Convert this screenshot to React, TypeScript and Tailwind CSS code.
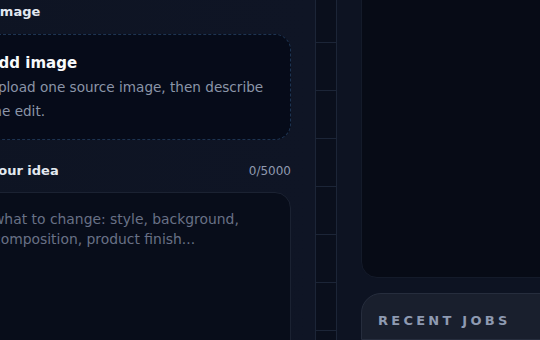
import React from "react";

const gridRows = Array.from({ length: 7 });

export default function App() {
  return (
    <div className="flex h-[340px] w-[540px] overflow-hidden bg-[#0c1220] font-['DejaVu_Sans',sans-serif]">
      {/* Left: edit form */}
      <div className="-ml-[52px] flex w-[367px] shrink-0 flex-col bg-gradient-to-r from-[#0e1423] to-[#0f1525] pl-6 pr-6 pt-[2px]">
        <div className="pl-[23px] text-[13px] font-bold leading-5 text-[#e2e8f0]">Image</div>
        <div className="mt-3 rounded-2xl border border-dashed border-[#1d3452] bg-[#060b19] px-[15px] pb-4 pt-4">
          <div className="-ml-px text-[15px] font-bold leading-6 text-[#f8fafc]">Add image</div>
          <p className="text-[13.6px] leading-6 text-[#8b95a8]">
            Upload one source image, then describe the edit.
          </p>
        </div>

        <div className="mt-[21px] flex items-center justify-between pl-[18px]">
          <span className="text-[13px] font-bold leading-5 text-[#e2e8f0]">Your idea</span>
          <span className="text-[12px] leading-5 text-[#8f9ab0]">0/5000</span>
        </div>
        <textarea
          className="mt-[11px] h-[180px] w-full shrink-0 resize-none rounded-2xl border border-[#1b2232] bg-[#080d1a] px-5 pb-4 pt-4 text-[13.9px] leading-5 text-[#cbd5e1] outline-none placeholder:text-[#687186]"
          placeholder="what to change: style, background, composition, product finish..."
        />
      </div>

      {/* Divider rail */}
      <div className="flex w-[22px] shrink-0 flex-col border-x border-[#1c2537] bg-[#0a0f1c] pt-[42px]">
        {gridRows.map((_, i) => (
          <div key={i} className="h-12 shrink-0 border-t border-[#1c2537]" />
        ))}
      </div>

      {/* Right: preview + recent jobs */}
      <div className="flex min-w-0 flex-1 flex-col gap-4 bg-[#0d1322] pl-6">
        <div className="-mr-10 -mt-10 h-[318px] shrink-0 rounded-2xl border border-[#141b2a] bg-[#070b16]" />
        <div className="-mr-10 -mt-px flex-1 rounded-tl-[20px] border border-[#262d3d] bg-[#191f2d] px-4 pt-[17px]">
          <div className="text-[13px] font-bold uppercase leading-5 tracking-[0.25em] text-[#8e9ab1]">
            Recent jobs
          </div>
        </div>
      </div>
    </div>
  );
}
